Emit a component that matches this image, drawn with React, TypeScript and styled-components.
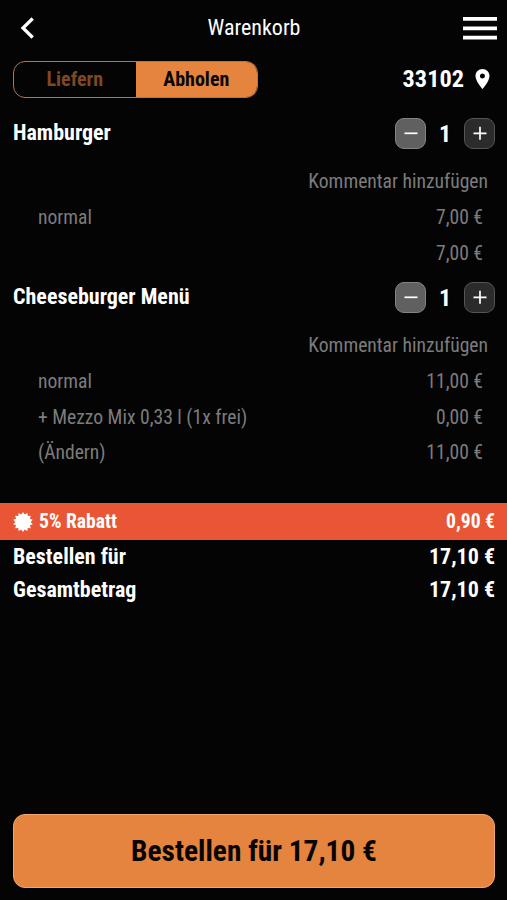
import React from "react";
import styled, { createGlobalStyle } from "styled-components";

const GlobalStyle = createGlobalStyle`
  * { box-sizing: border-box; }
  html, body { margin: 0; background: #040404; }
  button { font: inherit; padding: 0; border: 0; background: none; color: inherit; letter-spacing: inherit; }
`;

const Screen = styled.main`
  width: 507px;
  height: 900px;
  overflow: hidden;
  display: flex;
  flex-direction: column;
  background: #040404;
  color: #fff;
  font-family: "Roboto Condensed", Roboto, sans-serif;
  font-stretch: 75%;
  font-size: 19.6px;
`;

const Header = styled.header`
  display: grid;
  grid-template-columns: 60px 1fr 60px;
  align-items: center;
  height: 56px;
  padding: 0 10px 0 13px;
`;

const Title = styled.h1`
  margin: 0;
  padding-right: 2px;
  font-size: 22px;
  font-weight: 400;
  line-height: 26px;
  text-align: center;
`;

const IconButton = styled.button<{ $end?: boolean }>`
  display: flex;
  justify-content: ${(p) => (p.$end ? "flex-end" : "flex-start")};
`;

const ModeRow = styled.div`
  display: flex;
  justify-content: space-between;
  height: 37px;
  margin: 5px 13px 0;
`;

const Toggle = styled.div`
  display: flex;
  width: 245px;
  border: 1px solid #bd733b;
  border-radius: 12px;
  overflow: hidden;
`;

const ToggleOption = styled.button<{ $active?: boolean }>`
  && {
    flex: 1;
    padding-bottom: 2px;
    font-size: 20px;
    font-weight: 700;
    color: ${(p) => (p.$active ? "#080604" : "#7d4822")};
    background: ${(p) => (p.$active ? "#e4843f" : "transparent")};
  }
`;

const Location = styled.div`
  display: flex;
  align-items: center;
  gap: 11px;
  height: 35px;
  padding-right: 4px;
  font-size: 24.3px;
  font-weight: 700;
`;

const Product = styled.section`
  height: 164px;
  padding: 16px 12px 0 13px;
`;

const ProductHead = styled.div`
  display: flex;
  justify-content: space-between;
  align-items: center;
  height: 38px;
`;

const ProductName = styled.h2`
  margin: 0;
  padding-bottom: 1px;
  font-size: 22px;
  font-weight: 700;
`;

const Stepper = styled.div`
  display: grid;
  grid-template-columns: 31px 38px 31px;
  align-items: center;
  text-align: center;
  font-size: 24px;
  font-weight: 700;
`;

const StepButton = styled.button<{ $light?: boolean }>`
  display: grid;
  place-items: center;
  height: 31px;
  border: 1px solid ${(p) => (p.$light ? "#848484" : "#555")};
  border-radius: 9px;
  background: ${(p) => (p.$light ? "#606060" : "#2b2b2b")};
`;

const Count = styled.span`
  padding-top: 2px;
`;

const Comment = styled.div`
  margin-top: 10px;
  padding-right: 7px;
  height: 36px;
  line-height: 40px;
  text-align: right;
  color: #7c7c7c;
`;

const Line = styled.div`
  display: flex;
  justify-content: space-between;
  padding: 0 12px 0 25px;
  height: 35.5px;
  line-height: 40px;
  color: #7c7c7c;
`;

const Discount = styled.div`
  display: flex;
  align-items: center;
  gap: 6px;
  height: 37px;
  margin-top: 77px;
  padding: 0 12px 0 13px;
  background: #e95635;
  font-weight: 700;
`;

const DiscountValue = styled.span`
  margin-left: auto;
`;

const Totals = styled.dl`
  margin: 0;
  padding: 0 12px 0 13px;
  font-size: 22px;
  font-weight: 700;
`;

const TotalRow = styled.div`
  display: flex;
  justify-content: space-between;
  height: 33px;
  line-height: 33px;
`;

const TotalText = styled.dt``;
const TotalValue = styled.dd`
  margin: 0;
`;

const OrderButton = styled.button`
  && {
    height: 74px;
    margin: auto 12px 12px 13px;
    padding-bottom: 1px;
    border: 1px solid #f0a66d;
    border-radius: 12px;
    background: #e4843f;
    color: #080604;
    font-size: 29.4px;
    font-weight: 700;
  }
`;

const BURST = Array.from({ length: 28 }, (_, i) => {
  const r = i % 2 ? 7.7 : 10;
  const a = (i * Math.PI) / 14;
  return `${(10 + r * Math.sin(a)).toFixed(2)},${(10 - r * Math.cos(a)).toFixed(2)}`;
}).join(" ");

interface OrderItem {
  name: string;
  lines: [string, string][];
}

const ITEMS: OrderItem[] = [
  { name: "Hamburger", lines: [["normal", "7,00 €"], ["", "7,00 €"]] },
  {
    name: "Cheeseburger Menü",
    lines: [["normal", "11,00 €"], ["+ Mezzo Mix 0,33 l (1x frei)", "0,00 €"], ["(Ändern)", "11,00 €"]],
  },
];

function StepIcon({ plus }: { plus?: boolean }) {
  return (
    <svg width="14" height="14" viewBox="0 0 14 14" stroke="#fff" strokeWidth="1.7">
      <path d={plus ? "M.5 7.3h13M7 .8v13" : "M.5 7.3h13"} />
    </svg>
  );
}

function ProductEntry({ item }: { item: OrderItem }) {
  return (
    <Product>
      <ProductHead>
        <ProductName>{item.name}</ProductName>
        <Stepper>
          <StepButton $light aria-label="Weniger"><StepIcon /></StepButton>
          <Count>1</Count>
          <StepButton aria-label="Mehr"><StepIcon plus /></StepButton>
        </Stepper>
      </ProductHead>
      <Comment>Kommentar hinzufügen</Comment>
      {item.lines.map(([label, price], i) => (
        <Line key={i}><span>{label}</span><span>{price}</span></Line>
      ))}
    </Product>
  );
}

export default function App() {
  return (
    <>
      <GlobalStyle />
      <Screen>
        <Header>
          <IconButton aria-label="Zurück">
            <svg width="28" height="28" viewBox="0 0 28 28" fill="none" stroke="#fff" strokeWidth="3.3">
              <path d="M19.7 4.5 10 14l9.7 9.5" />
            </svg>
          </IconButton>
          <Title>Warenkorb</Title>
          <IconButton $end aria-label="Menü">
            <svg width="34" height="23" viewBox="0 0 34 23" fill="#fff">
              <path d="M0 0h34v3.7H0zM0 9.5h34v3.7H0zM0 18.7h34v3.7H0z" />
            </svg>
          </IconButton>
        </Header>
        <ModeRow>
          <Toggle>
            <ToggleOption>Liefern</ToggleOption>
            <ToggleOption $active>Abholen</ToggleOption>
          </Toggle>
          <Location>
            33102
            <svg width="15" height="20" viewBox="4.5 2 15 20" fill="#fff">
              <path d="M12 2C8.13 2 5 5.13 5 9c0 5.25 7 13 7 13s7-7.75 7-13c0-3.87-3.13-7-7-7zm0 9.5a2.5 2.5 0 1 1 0-5 2.5 2.5 0 0 1 0 5z" />
            </svg>
          </Location>
        </ModeRow>
        {ITEMS.map((item) => <ProductEntry key={item.name} item={item} />)}
        <Discount>
          <svg width="20" height="20" viewBox="0 0 20 20"><polygon points={BURST} fill="#fff" /></svg>
          <span>5% Rabatt</span>
          <DiscountValue>0,90 €</DiscountValue>
        </Discount>
        <Totals>
          <TotalRow><TotalText>Bestellen für</TotalText><TotalValue>17,10 €</TotalValue></TotalRow>
          <TotalRow><TotalText>Gesamtbetrag</TotalText><TotalValue>17,10 €</TotalValue></TotalRow>
        </Totals>
        <OrderButton>Bestellen für 17,10 €</OrderButton>
      </Screen>
    </>
  );
}
